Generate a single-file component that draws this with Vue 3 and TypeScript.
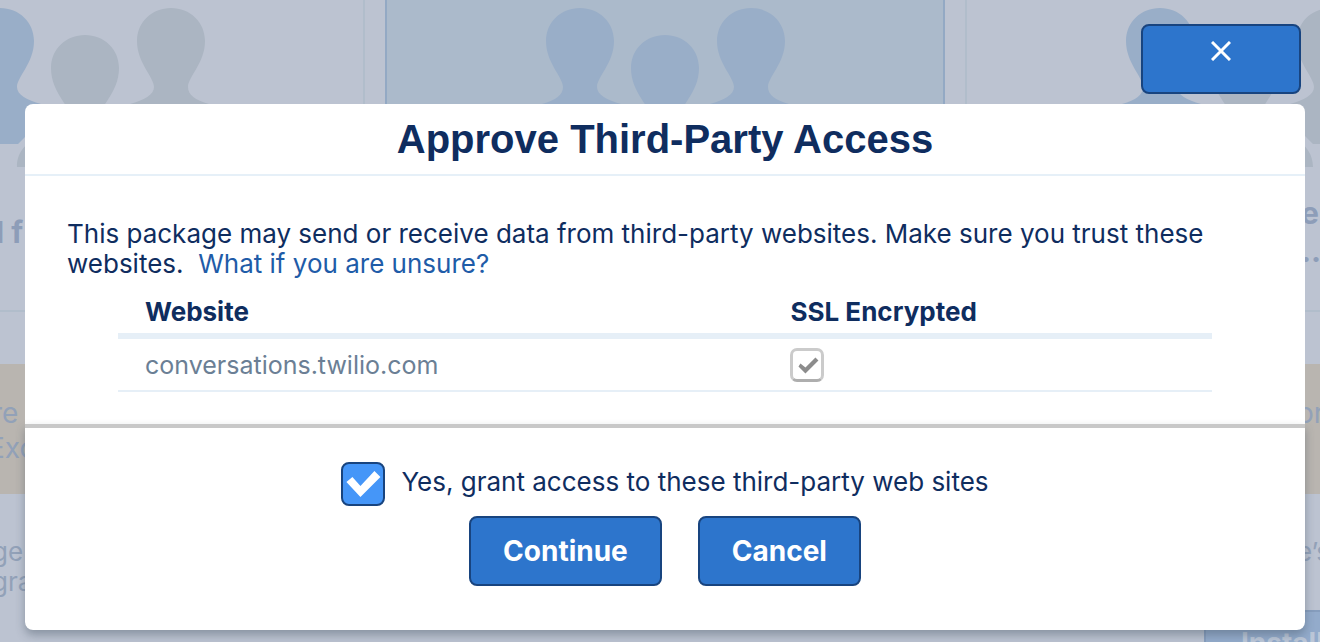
<script setup lang="ts">
import { ref } from 'vue'

interface Website {
  host: string
  ssl: boolean
}

const websites: Website[] = [{ host: 'conversations.twilio.com', ssl: true }]
const cards = ['mixed', 'selected', 'mixed']
const granted = ref(true)
const open = ref(true)
</script>

<template>
  <div class="page">
    <div class="backdrop" aria-hidden="true">
      <div class="cards">
        <div v-for="(kind, i) in cards" :key="i" class="card" :class="kind">
          <svg class="people" viewBox="0 0 320 170" width="320" height="170">
            <path class="person center" d="M160 35c19 0 34 14 34 33c0 25-20 38-20 51c0 12 54 12 54 48H92c0-36 54-36 54-48c0-13-20-26-20-51c0-19 15-33 34-33z" />
            <path class="person first" d="M75 8c19 0 34 14 34 33C109 63 92 77 92 87c0 8 10 13 24 17v17L100 137l-7 7H5v-15c0-16 18-20 32-25c14-4 21-9 21-17C58 77 41 63 41 41C41 22 56 8 75 8z" />
            <path class="person last" d="M246 8c-19 0-34 14-34 33c0 22 17 36 17 46c0 8-10 13-24 17v17l16 16l7 7h88v-15c0-16-18-20-32-25c-14-4-21-9-21-17c0-10 17-24 17-46c0-19-15-33-34-33z" />
          </svg>
        </div>
      </div>
      <div class="gutter left">
        <div class="block title"><div>l f</div></div>
        <div class="block note"><div>re</div><div>Exc</div></div>
        <div class="block detail"><div>ge</div><div>gra</div></div>
      </div>
      <div class="gutter right">
        <div class="block title"><div>e</div><div>..</div></div>
        <div class="block note"><div>or</div></div>
        <div class="block detail"><div>e’s</div></div>
      </div>
      <div class="install">Install</div>
    </div>

    <div v-if="open" class="modal">
      <button class="button close" type="button" aria-label="Close" @click="open = false">
        <svg viewBox="0 0 20 20" width="20" height="20">
          <path d="M1 1L19 19M19 1L1 19" fill="none" stroke="#fff" stroke-width="3" />
        </svg>
      </button>
      <section class="dialog" role="dialog" aria-labelledby="dialog-title">
        <header class="head">
          <h1 id="dialog-title">Approve Third-Party Access</h1>
        </header>
        <div class="body">
          <p>
            This package may send or receive data from third-party websites. Make sure you trust these websites.&nbsp;
            <a href="#">What if you are unsure?</a>
          </p>
          <table>
            <thead>
              <tr>
                <th class="site" scope="col">Website</th>
                <th id="ssl-col" scope="col">SSL Encrypted</th>
              </tr>
            </thead>
            <tbody>
              <tr v-for="site in websites" :key="site.host">
                <td>{{ site.host }}</td>
                <td><input class="check small" type="checkbox" :checked="site.ssl" disabled aria-labelledby="ssl-col" /></td>
              </tr>
            </tbody>
          </table>
        </div>
        <footer class="foot">
          <div class="grant">
            <input id="grant" v-model="granted" class="check large" type="checkbox" />
            <label for="grant">Yes, grant access to these third-party web sites</label>
          </div>
          <div class="actions">
            <button class="button" type="button" :disabled="!granted">Continue</button>
            <button class="button" type="button" @click="open = false">Cancel</button>
          </div>
        </footer>
      </section>
    </div>
  </div>
</template>

<style>
body {
  margin: 0;
  background: #bcc3d1;
}
</style>

<style scoped>
.page {
  position: relative;
  min-height: 100vh;
  overflow: hidden;
  font-family: Inter, "Liberation Sans", sans-serif;
  font-size: 26px;
  line-height: 30px;
  color: #0f2d5f;
}
.backdrop {
  position: absolute;
  inset: 0;
  overflow: hidden;
  background: #bcc3d1;
}
.cards {
  display: flex;
  justify-content: center;
  gap: 20px;
  height: 364px;
  padding-left: 10px;
}
.card {
  box-sizing: border-box;
  flex: 0 0 560px;
  display: flex;
  justify-content: center;
  border: 2px solid #b1bdcb;
  border-width: 0 2px;
  background: linear-gradient(#b1bdcb, #b1bdcb) 0 310px / 100% 2px no-repeat;
}
.card.selected {
  border-color: #93a9c4;
  background: #abbacb;
}
.people {
  flex: none;
}
.person {
  fill: #abb5c2;
}
.person.first,
.selected .person {
  fill: #99aec8;
}
.gutter {
  position: absolute;
  top: 0;
  bottom: 0;
  display: flex;
  flex-direction: column;
  overflow: hidden;
  white-space: nowrap;
  color: #92a1b8;
}
.gutter.left {
  left: 0;
  width: 25px;
}
.gutter.right {
  right: 0;
  width: 15px;
}
.block {
  box-sizing: border-box;
}
.block div {
  margin-left: -8px;
}
.left .note div {
  margin-left: -12px;
}
.left .note div:first-child {
  margin-left: -8px;
}
.block.title {
  display: flex;
  flex-direction: column;
  justify-content: center;
  height: 364px;
  padding-top: 100px;
  font-size: 30px;
  font-weight: 700;
  line-height: 38px;
  color: #8d9db8;
}
.block.title div {
  margin-left: -4px;
}
.block.note {
  height: 130px;
  padding-top: 32px;
  font-size: 28px;
  line-height: 35px;
  background: #b9b5b0;
}
.block.detail {
  padding-top: 43px;
}
.install {
  position: absolute;
  top: 610px;
  right: -90px;
  box-sizing: border-box;
  width: 206px;
  height: 70px;
  padding: 16px 0 0 35px;
  border: 2px solid #869dbd;
  background: #93abcb;
  color: #bcc7d8;
  font-size: 28px;
  font-weight: 700;
}
.modal {
  position: relative;
  display: flex;
  flex-direction: column;
  padding: 24px 15px 12px 25px;
}
.button {
  box-sizing: border-box;
  height: 70px;
  padding: 0 32px;
  border: 2px solid #18447f;
  border-radius: 8px;
  background: #2d75cc;
  color: #fff;
  font: 700 28px/34px Inter, "Liberation Sans", sans-serif;
}
.close {
  display: flex;
  align-self: flex-end;
  justify-content: center;
  align-items: flex-start;
  width: 160px;
  margin: 0 4px 10px 0;
  padding: 15px 0 0;
}
.dialog {
  border-radius: 8px;
  background: #fff;
}
.head {
  border-bottom: 2px solid #e6f0f8;
}
h1 {
  margin: 0;
  font: 700 40px/70px "Liberation Sans", Arial, sans-serif;
  text-align: center;
}
.body {
  padding: 43px 42px 32px;
}
p {
  margin: 0;
}
a {
  color: #1f5ca8;
  text-decoration: none;
}
table {
  width: calc(100% - 102px);
  margin: 14px 51px 0;
  border-collapse: separate;
  border-spacing: 0;
  text-align: left;
}
.site {
  width: 59%;
}
th,
td {
  box-sizing: border-box;
  height: 46px;
  padding: 0 0 2px 27px;
  border-bottom: 6px solid #e6eff7;
}
td {
  height: 53px;
  padding-bottom: 0;
  border-bottom-width: 2px;
  color: #6b7f95;
  font-size: 25px;
}
.check {
  appearance: none;
  box-sizing: border-box;
  flex: none;
  display: block;
  margin: 0;
}
.check::before {
  content: "";
  display: block;
  width: 100%;
  height: 100%;
}
.check.large {
  width: 44px;
  height: 44px;
  border: 2px solid #18447f;
  border-radius: 8px;
  background: #fff;
}
.check.large:checked {
  background: #4596f8;
}
.check.large:checked::before {
  background: #fff;
  clip-path: polygon(3px 18px, 9px 13px, 17px 22px, 31px 7px, 37px 13px, 17px 33px);
}
.check.small {
  width: 34px;
  height: 34px;
  border: 3px solid #cbcbcb;
  border-bottom-color: #aeaeae;
  border-radius: 7px;
  background: #fff;
}
.check.small:checked::before {
  background: #8c8c8c;
  clip-path: polygon(5px 16px, 7px 13px, 12px 17px, 22px 7px, 25px 10px, 12px 23px);
}
.foot {
  padding: 34px 0 44px;
  border-top: 4px solid #c8c8c8;
  border-radius: 0 0 8px 8px;
  box-shadow: 0 5px 10px rgba(60, 75, 90, 0.4);
}
.grant,
.actions {
  display: flex;
  justify-content: center;
}
.grant {
  gap: 16px;
}
.grant label {
  padding-top: 5px;
}
.actions {
  gap: 36px;
  margin-top: 10px;
}
</style>
